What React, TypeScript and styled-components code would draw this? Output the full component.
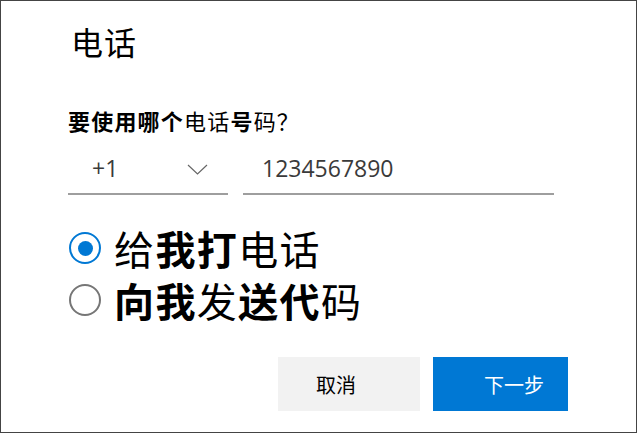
import React, { useState } from "react";
import styled, { createGlobalStyle } from "styled-components";

const GlobalStyle = createGlobalStyle`
  html, body {
    margin: 0;
    padding: 0;
    background: #ffffff;
  }
  * {
    box-sizing: border-box;
  }
`;

const CJK = `"Noto Sans CJK SC", "Noto Sans", sans-serif`;
const LATIN = `"Open Sans", "Noto Sans CJK SC", sans-serif`;

const Dialog = styled.div`
  width: 637px;
  height: 433px;
  border: 1px solid #444444;
  background: #ffffff;
  padding: 24px 68px 0 67px;
  display: flex;
  flex-direction: column;
  font-family: ${CJK};
  color: #000000;
`;

const Title = styled.h1`
  margin: 0;
  padding-left: 3px;
  font-size: 32px;
  line-height: 32px;
  font-weight: 400;
  letter-spacing: 1px;
`;

const Question = styled.p`
  margin: 52px 0 0;
  font-size: 22px;
  line-height: 22px;
  font-weight: 400;
  letter-spacing: 1.2px;
`;

const B = styled.span`
  font-weight: 700;
`;

const PhoneRow = styled.div`
  margin-top: 24px;
  display: flex;
  gap: 15px;
`;

const Field = styled.div<{ $width: number; $pad: number }>`
  width: ${({ $width }) => $width}px;
  height: 40px;
  padding: 1px 0 0 ${({ $pad }) => $pad}px;
  border-bottom: 2px solid #9e9e9e;
  display: flex;
  align-items: flex-start;
  justify-content: space-between;
  font-family: ${LATIN};
  font-size: 23px;
  line-height: 24px;
  color: #3a3a3a;
`;

const Chevron = styled.svg`
  margin: 8px 20px 0 0;
  flex-shrink: 0;
`;

const RadioGroup = styled.div`
  margin-top: 27px;
  display: flex;
  flex-direction: column;
`;

const Option = styled.label`
  display: flex;
  align-items: center;
  gap: 13px;
  height: 52px;
  cursor: pointer;
`;

const OptionText = styled.span`
  display: inline-block;
  height: 52px;
  font-size: 40px;
  line-height: 52px;
  letter-spacing: 1.4px;

  & > span {
    display: inline-block;
    height: 52px;
  }
`;

const Circle = styled.span<{ $checked: boolean }>`
  width: 32px;
  height: 32px;
  border-radius: 50%;
  border: 2px solid ${({ $checked }) => ($checked ? "#0078d4" : "#767676")};
  display: flex;
  align-items: center;
  justify-content: center;
  flex-shrink: 0;
  margin-left: 1px;

  &::after {
    content: "";
    width: 15px;
    height: 15px;
    border-radius: 50%;
    background: #0078d4;
    display: ${({ $checked }) => ($checked ? "block" : "none")};
  }
`;

const Actions = styled.div`
  margin-top: 31px;
  display: flex;
  justify-content: flex-end;
  gap: 13px;
`;

const Button = styled.button<{ $primary?: boolean; $pad: number; $width: number }>`
  width: ${({ $width }) => $width}px;
  height: 54px;
  border: none;
  padding: 0 0 0 ${({ $pad }) => $pad}px;
  display: flex;
  align-items: center;
  font-family: ${CJK};
  font-size: 20px;
  background: ${({ $primary }) => ($primary ? "#0078d4" : "#f2f2f2")};
  color: ${({ $primary }) => ($primary ? "#ffffff" : "#000000")};
  cursor: pointer;
`;

export default function App() {
  const [method, setMethod] = useState<"call" | "text">("call");

  return (
    <>
      <GlobalStyle />
      <Dialog>
        <Title>电话</Title>
        <Question>
          <B>要使用哪个</B>电话<B>号</B>码？
        </Question>
        <PhoneRow>
          <Field $width={160} $pad={24}>
            +1
            <Chevron width="21" height="11" viewBox="0 0 21 11">
              <path d="M1 1 L10.5 10 L20 1" fill="none" stroke="#666" strokeWidth="1.2" />
            </Chevron>
          </Field>
          <Field $width={311} $pad={19}>
            1234567890
          </Field>
        </PhoneRow>
        <RadioGroup>
          <Option onClick={() => setMethod("call")}>
            <Circle $checked={method === "call"} />
            <OptionText>
              给<B>我打</B>电话
            </OptionText>
          </Option>
          <Option onClick={() => setMethod("text")}>
            <Circle $checked={method === "text"} />
            <OptionText>
              <B>向我</B>发<B>送代</B>码
            </OptionText>
          </Option>
        </RadioGroup>
        <Actions>
          <Button $width={142} $pad={38}>取消</Button>
          <Button $primary $width={135} $pad={51}>下一步</Button>
        </Actions>
      </Dialog>
    </>
  );
}
